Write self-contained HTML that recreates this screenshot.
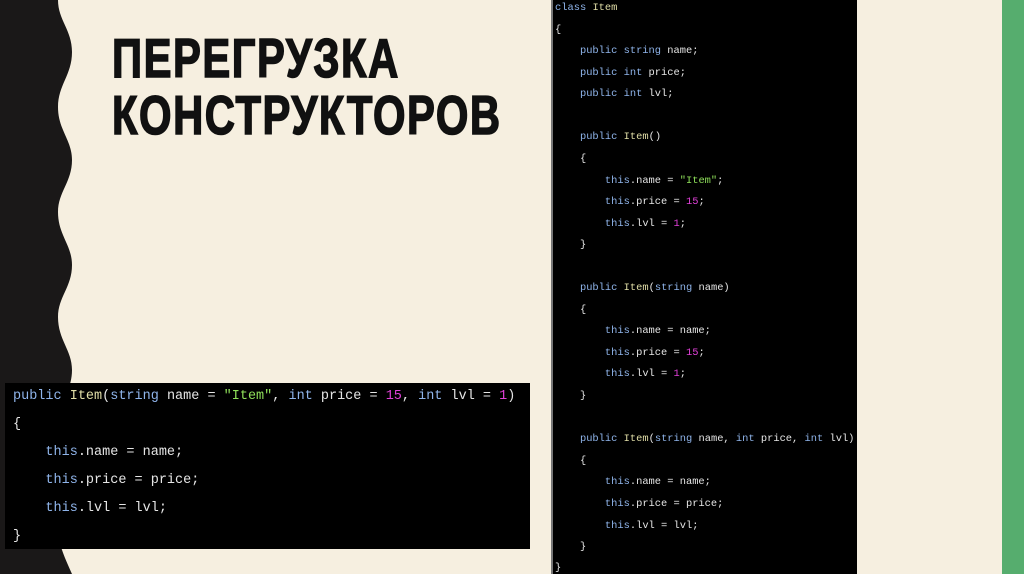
<!DOCTYPE html>
<html><head><meta charset="utf-8"><style>
body{margin:0;width:1024px;height:574px;overflow:hidden;background:#f6efe0;position:relative;font-family:"Liberation Mono",monospace}
.t{position:absolute;left:112px;font-family:"Liberation Sans Narrow","Liberation Sans",sans-serif;font-weight:bold;font-size:55px;line-height:55px;color:#111;-webkit-text-stroke:1.6px #111;transform-origin:0 0;transform:scaleX(0.76);letter-spacing:2px;white-space:nowrap}
.code{position:absolute;background:#000;color:#e6e6e6;white-space:pre}
.k{color:#8fb4ea}.y{color:#e2dfa8}.s{color:#8fe05a}.n{color:#e040d8}
.r{left:551px;top:0;width:306px;height:574px;font-size:10.4px;border-left:2px solid #777;box-sizing:border-box}
.r div{position:absolute;left:2px}
.b{left:5px;top:383px;width:525px;height:166px;font-size:13.5px}
.b div{position:absolute;left:8px}
</style></head><body>
<svg style="position:absolute;left:0;top:0" width="80" height="574"><path fill="#1a1818" d="M0 0 H58 C58 20 72 30 72 52 C72 75 58 85 58 107 C58 130 72 140 72 160 C72 182 58 192 58 212 C58 235 72 245 72 265 C72 287 58 297 58 317 C58 340 72 350 72 370 C72 392 58 402 58 422 C58 445 72 455 72 475 C72 497 58 507 58 527 C58 545 66 560 72 574 H0Z"/></svg>
<div style="position:absolute;left:1002px;top:0;width:22px;height:574px;background:#56ad6e"></div>
<div class="t" style="top:31px">ПЕРЕГРУЗКА</div>
<div class="t" style="top:88px">КОНСТРУКТОРОВ</div>
<div class="code r">
<div style="top:2px"><span class="k">class</span> <span class="y">Item</span></div>
<div style="top:24px">{</div>
<div style="top:45px">    <span class="k">public string</span> name;</div>
<div style="top:67px">    <span class="k">public int</span> price;</div>
<div style="top:88px">    <span class="k">public int</span> lvl;</div>
<div style="top:131px">    <span class="k">public</span> <span class="y">Item</span>()</div>
<div style="top:153px">    {</div>
<div style="top:175px">        <span class="k">this</span>.name = <span class="s">"Item"</span>;</div>
<div style="top:196px">        <span class="k">this</span>.price = <span class="n">15</span>;</div>
<div style="top:218px">        <span class="k">this</span>.lvl = <span class="n">1</span>;</div>
<div style="top:239px">    }</div>
<div style="top:282px">    <span class="k">public</span> <span class="y">Item</span>(<span class="k">string</span> name)</div>
<div style="top:304px">    {</div>
<div style="top:325px">        <span class="k">this</span>.name = name;</div>
<div style="top:347px">        <span class="k">this</span>.price = <span class="n">15</span>;</div>
<div style="top:368px">        <span class="k">this</span>.lvl = <span class="n">1</span>;</div>
<div style="top:390px">    }</div>
<div style="top:433px">    <span class="k">public</span> <span class="y">Item</span>(<span class="k">string</span> name, <span class="k">int</span> price, <span class="k">int</span> lvl)</div>
<div style="top:455px">    {</div>
<div style="top:476px">        <span class="k">this</span>.name = name;</div>
<div style="top:498px">        <span class="k">this</span>.price = price;</div>
<div style="top:520px">        <span class="k">this</span>.lvl = lvl;</div>
<div style="top:541px">    }</div>
<div style="top:562px">}</div>
</div>
<div class="code b">
<div style="top:6px"><span class="k">public</span> <span class="y">Item</span>(<span class="k">string</span> name = <span class="s">"Item"</span>, <span class="k">int</span> price = <span class="n">15</span>, <span class="k">int</span> lvl = <span class="n">1</span>)</div>
<div style="top:34px">{</div>
<div style="top:62px">    <span class="k">this</span>.name = name;</div>
<div style="top:90px">    <span class="k">this</span>.price = price;</div>
<div style="top:118px">    <span class="k">this</span>.lvl = lvl;</div>
<div style="top:146px">}</div>
</div>
</body></html>
